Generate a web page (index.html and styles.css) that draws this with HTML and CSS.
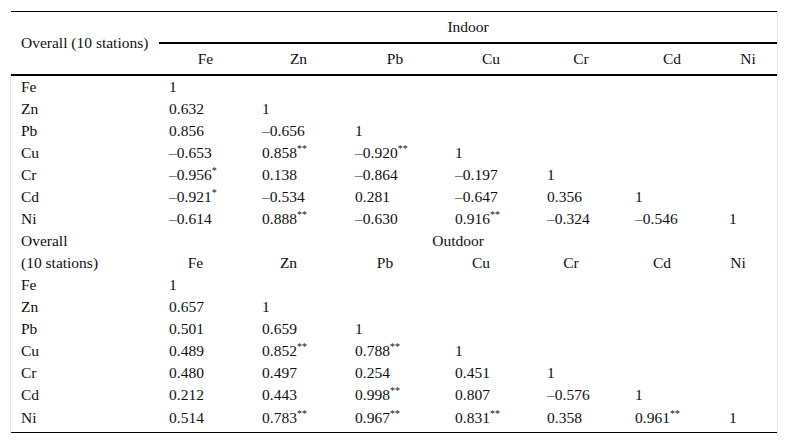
FILE: index.html
```html
<!DOCTYPE html>
<html>
<head>
<meta charset="utf-8">
<link rel="stylesheet" href="styles.css">
</head>
<body>
<div class="wrap">
<table class="corr">
<colgroup>
<col class="c0"><col class="c1"><col class="c2"><col class="c3"><col class="c4"><col class="c5"><col class="c6"><col class="c7">
</colgroup>
<thead>
<tr class="h1">
<th class="lead" rowspan="2">Overall (10 stations)</th>
<th class="grp" colspan="7">Indoor</th>
</tr>
<tr class="h2">
<th>Fe</th><th>Zn</th><th>Pb</th><th>Cu</th><th>Cr</th><th>Cd</th><th>Ni</th>
</tr>
</thead>
<tbody>
<tr><td>Fe</td><td>1</td><td></td><td></td><td></td><td></td><td></td><td></td></tr>
<tr><td>Zn</td><td>0.632</td><td>1</td><td></td><td></td><td></td><td></td><td></td></tr>
<tr><td>Pb</td><td>0.856</td><td>–0.656</td><td>1</td><td></td><td></td><td></td><td></td></tr>
<tr><td>Cu</td><td>–0.653</td><td>0.858<sup>**</sup></td><td>–0.920<sup>**</sup></td><td>1</td><td></td><td></td><td></td></tr>
<tr><td>Cr</td><td>–0.956<sup>*</sup></td><td>0.138</td><td>–0.864</td><td>–0.197</td><td>1</td><td></td><td></td></tr>
<tr><td>Cd</td><td>–0.921<sup>*</sup></td><td>–0.534</td><td>0.281</td><td>–0.647</td><td>0.356</td><td>1</td><td></td></tr>
<tr><td>Ni</td><td>–0.614</td><td>0.888<sup>**</sup></td><td>–0.630</td><td>0.916<sup>**</sup></td><td>–0.324</td><td>–0.546</td><td>1</td></tr>
<tr class="sub"><td>Overall</td><td class="grp2" colspan="7">Outdoor</td></tr>
<tr class="sub"><td>(10 stations)</td><td class="hd">Fe</td><td class="hd">Zn</td><td class="hd">Pb</td><td class="hd">Cu</td><td class="hd">Cr</td><td class="hd">Cd</td><td class="hd">Ni</td></tr>
<tr><td>Fe</td><td>1</td><td></td><td></td><td></td><td></td><td></td><td></td></tr>
<tr><td>Zn</td><td>0.657</td><td>1</td><td></td><td></td><td></td><td></td><td></td></tr>
<tr><td>Pb</td><td>0.501</td><td>0.659</td><td>1</td><td></td><td></td><td></td><td></td></tr>
<tr><td>Cu</td><td>0.489</td><td>0.852<sup>**</sup></td><td>0.788<sup>**</sup></td><td>1</td><td></td><td></td><td></td></tr>
<tr><td>Cr</td><td>0.480</td><td>0.497</td><td>0.254</td><td>0.451</td><td>1</td><td></td><td></td></tr>
<tr><td>Cd</td><td>0.212</td><td>0.443</td><td>0.998<sup>**</sup></td><td>0.807</td><td>–0.576</td><td>1</td><td></td></tr>
<tr class="last"><td>Ni</td><td>0.514</td><td>0.783<sup>**</sup></td><td>0.967<sup>**</sup></td><td>0.831<sup>**</sup></td><td>0.358</td><td>0.961<sup>**</sup></td><td>1</td></tr>
</tbody>
</table>
</div>
</body>
</html>
```
FILE: styles.css
```css
html, body {
  margin: 0;
  padding: 0;
  background: #fff;
}
body {
  font-family: "Liberation Serif", "Times New Roman", serif;
  font-size: 15.5px;
  color: #111;
}
.wrap {
  margin: 11px 0 0 10px;
  width: 767px;
  border-right: 1px solid #e6e6e6;
}
.corr {
  width: 766px;
  margin-left: 1px;
  table-layout: fixed;
  border-collapse: collapse;
  border-top: 1px solid #000;
  border-bottom: 1px solid #000;
}
.c0 { width: 148px; }
.c1 { width: 93px; }
.c2 { width: 93px; }
.c3 { width: 100px; }
.c4 { width: 92px; }
.c5 { width: 88px; }
.c6 { width: 94px; }
.c7 { width: 58px; }
th, td {
  padding: 0 10px;
  white-space: nowrap;
  font-weight: normal;
  text-align: left;
  height: 22px;
  line-height: 22px;
  vertical-align: middle;
}
thead th {
  text-align: center;
}
.h1 th {
  height: 30px;
  line-height: 30px;
}
.h2 th {
  height: 30px;
  line-height: 30px;
  border-bottom: 2px solid #000;
}
thead th.lead {
  text-align: left;
  border-bottom: 2px solid #000;
}
.h1 .grp {
  border-bottom: 2px solid #000;
}
tbody td:first-child {
  box-shadow: -1px 0 0 #e6e6e6;
}
.sub .grp2 {
  text-align: center;
  padding: 0 20px 0 0;
}
.sub .hd {
  text-align: center;
  padding: 0 20px 0 0;
}
.last td {
  height: 24px;
  padding-bottom: 2px;
}
sup {
  font-size: 10px;
  line-height: 0;
  vertical-align: 6px;
}
```
